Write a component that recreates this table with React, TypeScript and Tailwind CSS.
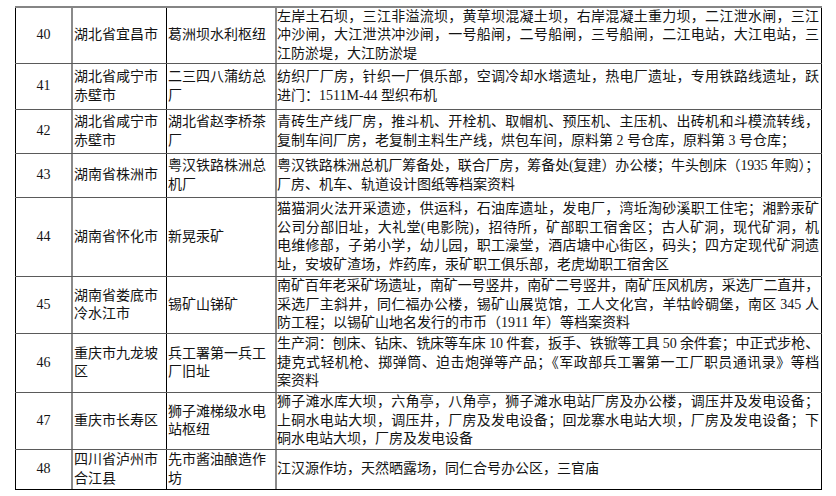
import React from 'react'

type Row = {
  no: string
  city: string[]
  name: string[]
  lines: string[]
  h: string
  tight?: Record<number, string>
}

const rows: Row[] = [
  {
    no: '40',
    city: ['湖北省宜昌市'],
    name: ['葛洲坝水利枢纽'],
    lines: [
      '左岸土石坝，三江非溢流坝，黄草坝混凝土坝，右岸混凝土重力坝，二江泄水闸，三江',
      '冲沙闸，大江泄洪冲沙闸，一号船闸，二号船闸，三号船闸，二江电站，大江电站，三',
      '江防淤堤，大江防淤堤',
    ],
    h: 'h-[56px]',
  },
  {
    no: '41',
    city: ['湖北省咸宁市', '赤壁市'],
    name: ['二三四八蒲纺总', '厂'],
    lines: [
      '纺织厂厂房，针织一厂俱乐部，空调冷却水塔遗址，热电厂遗址，专用铁路线遗址，跃',
      '进门：1511M-44 型织布机',
    ],
    h: 'h-[46px]',
  },
  {
    no: '42',
    city: ['湖北省咸宁市', '赤壁市'],
    name: ['湖北省赵李桥茶', '厂'],
    lines: [
      '青砖生产线厂房，推斗机、开栓机、取帽机、预压机、主压机、出砖机和斗模流转线，',
      '复制车间厂房，老复制主料生产线，烘包车间，原料第 2 号仓库，原料第 3 号仓库；',
    ],
    h: 'h-[44px]',
  },
  {
    no: '43',
    city: ['湖南省株洲市'],
    name: ['粤汉铁路株洲总', '机厂'],
    lines: [
      '粤汉铁路株洲总机厂筹备处，联合厂房，筹备处(复建）办公楼；牛头刨床（1935 年购）；',
      '厂房、机车、轨道设计图纸等档案资料',
    ],
    h: 'h-[44px]',
    tight: { 0: 'tracking-[-0.33px]' },
  },
  {
    no: '44',
    city: ['湖南省怀化市'],
    name: ['新晃汞矿'],
    lines: [
      '猫猫洞火法开采遗迹，供运科，石油库遗址，发电厂，湾坵淘砂溪职工住宅；湘黔汞矿',
      '公司分部旧址，大礼堂(电影院)，招待所，矿部职工宿舍区；古人矿洞，现代矿洞，机',
      '电维修部，子弟小学，幼儿园，职工澡堂，酒店塘中心街区，码头；四方定现代矿洞遗',
      '址，安坡矿渣场，炸药库，汞矿职工俱乐部，老虎坳职工宿舍区',
    ],
    h: 'h-[79px]',
  },
  {
    no: '45',
    city: ['湖南省娄底市', '冷水江市'],
    name: ['锡矿山锑矿'],
    lines: [
      '南矿百年老采矿场遗址，南矿一号竖井，南矿二号竖井，南矿压风机房，采选厂二直井，',
      '采选厂主斜井，同仁福办公楼，锡矿山展览馆，工人文化宫，羊牯岭碉堡，南区 345 人',
      '防工程；以锡矿山地名发行的市币（1911 年）等档案资料',
    ],
    h: 'h-[57px]',
    tight: { 0: 'tracking-[-0.16px]' },
  },
  {
    no: '46',
    city: ['重庆市九龙坡', '区'],
    name: ['兵工署第一兵工', '厂旧址'],
    lines: [
      '生产洞：刨床、钻床、铣床等车床 10 件套，扳手、铁锨等工具 50 余件套；中正式步枪、',
      '捷克式轻机枪、掷弹筒、迫击炮弹等产品；《军政部兵工署第一工厂职员通讯录》等档',
      '案资料',
    ],
    h: 'h-[59px]',
    tight: { 0: 'tracking-[-0.16px]', 1: 'tracking-[-0.16px]' },
  },
  {
    no: '47',
    city: ['重庆市长寿区'],
    name: ['狮子滩梯级水电', '站枢纽'],
    lines: [
      '狮子滩水库大坝，六角亭，八角亭，狮子滩水电站厂房及办公楼，调压井及发电设备；',
      '上硐水电站大坝，调压井，厂房及发电设备；回龙寨水电站大坝，厂房及发电设备；下',
      '硐水电站大坝，厂房及发电设备',
    ],
    h: 'h-[57px]',
  },
  {
    no: '48',
    city: ['四川省泸州市', '合江县'],
    name: ['先市酱油酿造作', '坊'],
    lines: ['江汉源作坊，天然晒露场，同仁合号办公区，三官庙'],
    h: 'h-[40px]',
  },
]

const font = "font-['Liberation_Serif','Noto_Sans_CJK_SC',serif]"

export default function App() {
  return (
    <div lang="zh-CN" className={`min-h-[496px] w-[836px] bg-white pl-[15px] pt-[6px] text-[14px] leading-[18.5px] text-[#141414] ${font}`}>
      <div className="w-[807px] border-t-2 border-[#858585]">
        {rows.map((r, i) => (
          <div
            key={r.no}
            className={`flex ${r.h} border-b ${i === rows.length - 1 ? 'border-black' : 'border-[#5a5a5a]'}`}
          >
            {/* 序号 */}
            <div className="flex w-[58px] shrink-0 items-center justify-center border-l border-r-2 border-l-black border-r-[#8a8a8a]">
              {r.no}
            </div>
            {/* 地区 */}
            <div className="flex w-[94px] shrink-0 flex-col justify-center border-r border-black pl-[1px]">
              {r.city.map((c) => (
                <div key={c}>{c}</div>
              ))}
            </div>
            {/* 名称 */}
            <div className="flex w-[110px] shrink-0 flex-col justify-center border-r-2 border-[#8a8a8a] pl-[1px]">
              {r.name.map((n) => (
                <div key={n}>{n}</div>
              ))}
            </div>
            {/* 核心物项 */}
            <div className="flex w-[545px] shrink-0 flex-col justify-center border-r border-black pr-[2px]">
              {r.lines.map((l, j) => (
                <div
                  key={j}
                  className={`whitespace-nowrap ${j < r.lines.length - 1 ? 'text-justify [text-align-last:justify]' : 'text-left'} ${r.tight?.[j] ?? ''}`}
                >
                  {l}
                </div>
              ))}
            </div>
          </div>
        ))}
      </div>
    </div>
  )
}
